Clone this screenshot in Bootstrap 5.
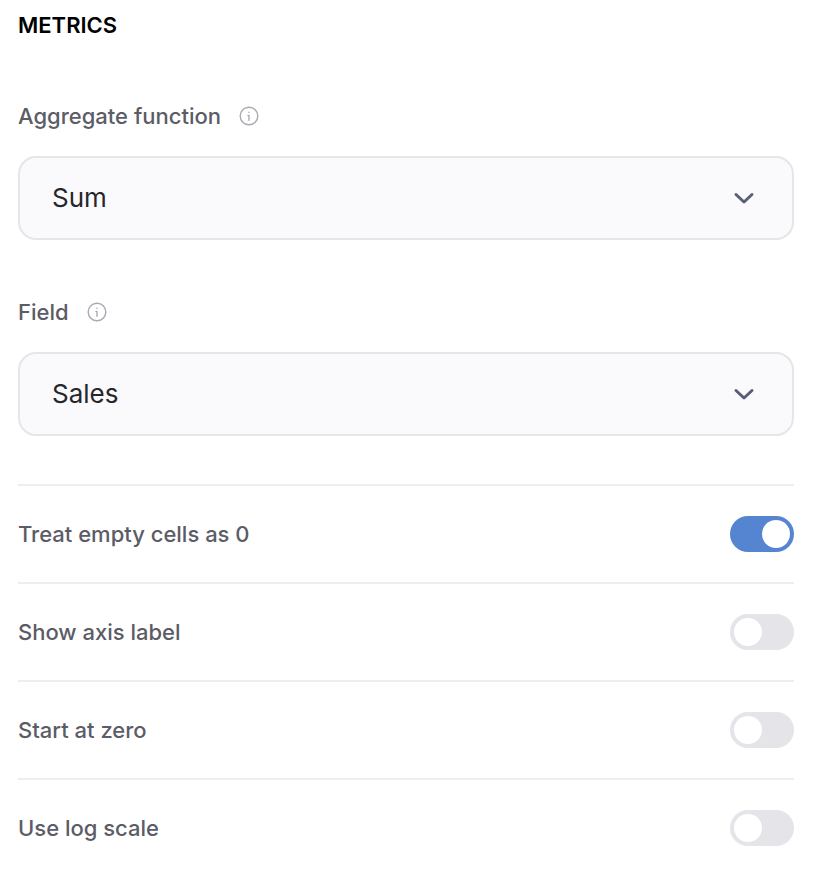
<!DOCTYPE html>
<html lang="en">
<head>
<meta charset="utf-8">
<title>Metrics</title>
<link href="https://cdn.jsdelivr.net/npm/bootstrap@5.3.0/dist/css/bootstrap.min.css" rel="stylesheet">
<style>
body { font-family: "Inter", "Liberation Sans", sans-serif; background: #fff; }
.panel { padding: 11px 22px 0 18px; }
.panel-title { font-size: 22px; line-height: 28px; font-weight: 600; color: #000; margin: 0 0 63px; }
.field-label { font-size: 22px; line-height: 28px; font-weight: 500; color: #5c5c66; margin: 0; gap: 18px; }
.info-ic { width: 20px; height: 20px; color: #a9a9b2; flex: none; }
.picker { height: 84px; margin: 26px 0 58px; padding: 0 37px 2px 32px; background: #fafafc; border: 2px solid #e6e6ea; border-radius: 18px; font-size: 26px; color: #26262c; }
.picker svg { width: 22px; height: 14px; color: #5a5f78; margin-top: 2px; }
.set-row { height: 98px; border-top: 2px solid #eeeef1; }
.set-row .field-label { margin: 0; }
.set-list { margin-top: -10px; }
.toggle.form-check-input { width: 64px; height: 36px; margin: 0; float: none; border: 0; border-radius: 18px; background-color: #e4e4e9; background-size: 28px 28px; background-position: 4px center; background-repeat: no-repeat; box-shadow: none; background-image: url("data:image/svg+xml,%3csvg xmlns='http://www.w3.org/2000/svg' viewBox='-4 -4 8 8'%3e%3ccircle r='4' fill='%23fff'/%3e%3c/svg%3e"); }
.toggle.form-check-input:checked { background-color: #5585d0; background-position: 32px center; background-image: url("data:image/svg+xml,%3csvg xmlns='http://www.w3.org/2000/svg' viewBox='-4 -4 8 8'%3e%3ccircle r='4' fill='%23fff'/%3e%3c/svg%3e"); }
.toggle-wrap { padding: 0; margin: 0; min-height: 0; line-height: 0; }
</style>
</head>
<body>
<div class="panel">
  <h2 class="panel-title">METRICS</h2>

  <div class="field-label d-flex align-items-center">
    <span>Aggregate function</span>
    <svg class="info-ic" viewBox="0 0 20 20" fill="none" stroke="currentColor" stroke-width="1.4" stroke-linecap="round"><circle cx="10" cy="10" r="8.8"/><path d="M10 9.4v4.8M9 9.4h1"/><circle cx="10" cy="6.2" r=".8" fill="currentColor" stroke="none"/></svg>
  </div>
  <div class="picker d-flex align-items-center justify-content-between">
    <span>Sum</span>
    <svg viewBox="0 0 22 14" fill="none" stroke="currentColor" stroke-width="3" stroke-linecap="round" stroke-linejoin="round"><path d="M3 3.5l8 7.5 8-7.5"/></svg>
  </div>

  <div class="field-label d-flex align-items-center">
    <span>Field</span>
    <svg class="info-ic" viewBox="0 0 20 20" fill="none" stroke="currentColor" stroke-width="1.4" stroke-linecap="round"><circle cx="10" cy="10" r="8.8"/><path d="M10 9.4v4.8M9 9.4h1"/><circle cx="10" cy="6.2" r=".8" fill="currentColor" stroke="none"/></svg>
  </div>
  <div class="picker d-flex align-items-center justify-content-between">
    <span>Sales</span>
    <svg viewBox="0 0 22 14" fill="none" stroke="currentColor" stroke-width="3" stroke-linecap="round" stroke-linejoin="round"><path d="M3 3.5l8 7.5 8-7.5"/></svg>
  </div>

  <div class="set-list">
    <div class="set-row d-flex align-items-center justify-content-between">
      <span class="field-label">Treat empty cells as 0</span>
      <div class="form-check form-switch toggle-wrap"><input class="form-check-input toggle" type="checkbox" role="switch" checked aria-label="Treat empty cells as 0"></div>
    </div>
    <div class="set-row d-flex align-items-center justify-content-between">
      <span class="field-label">Show axis label</span>
      <div class="form-check form-switch toggle-wrap"><input class="form-check-input toggle" type="checkbox" role="switch" aria-label="Show axis label"></div>
    </div>
    <div class="set-row d-flex align-items-center justify-content-between">
      <span class="field-label">Start at zero</span>
      <div class="form-check form-switch toggle-wrap"><input class="form-check-input toggle" type="checkbox" role="switch" aria-label="Start at zero"></div>
    </div>
    <div class="set-row d-flex align-items-center justify-content-between">
      <span class="field-label">Use log scale</span>
      <div class="form-check form-switch toggle-wrap"><input class="form-check-input toggle" type="checkbox" role="switch" aria-label="Use log scale"></div>
    </div>
  </div>
</div>
<script src="https://cdn.jsdelivr.net/npm/bootstrap@5.3.0/dist/js/bootstrap.bundle.min.js"></script>
</body>
</html>
